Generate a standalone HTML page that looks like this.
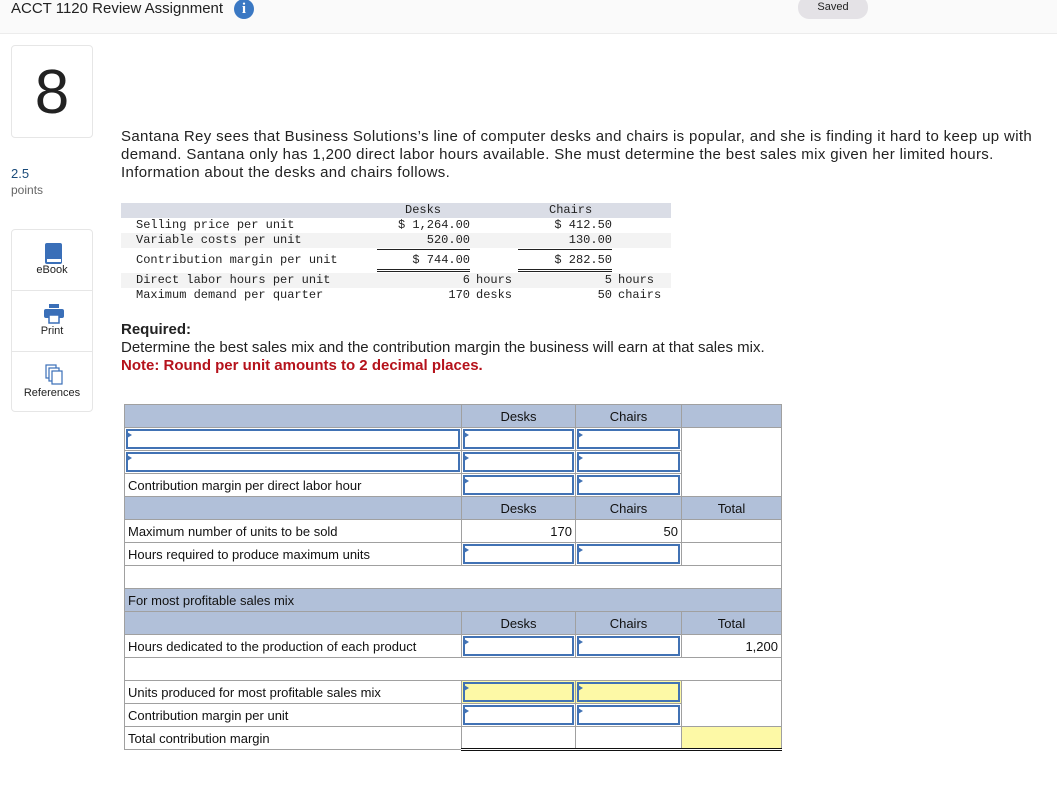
<!DOCTYPE html>
<html><head><meta charset="utf-8"><style>
*{box-sizing:border-box;margin:0;padding:0}
body{width:1057px;height:795px;background:#fff;font-family:"Liberation Sans",Arial,sans-serif;color:#222;position:relative;overflow:hidden}
.topbar{position:absolute;left:0;top:0;width:1057px;height:34px;background:#fafafa;border-bottom:1px solid #ececec}
.title{position:absolute;left:11px;top:0;font-size:15px;color:#222}
.info{position:absolute;left:234px;top:-1px;width:20px;height:20px;border-radius:50%;background:#3a78c3;color:#fff;font-weight:bold;font-family:"Liberation Serif",serif;font-size:15px;text-align:center;line-height:20px}
.saved{position:absolute;left:798px;top:-4px;width:70px;height:23px;border-radius:11px;background:#e4e2e6;font-size:11px;text-align:center;line-height:23px;color:#222}
.qnum{position:absolute;left:11px;top:45px;width:82px;height:93px;border:1px solid #e6e6e6;border-radius:4px;font-size:62px;text-align:center;line-height:93px;color:#222;font-weight:300}
.pts{position:absolute;left:11px;top:166px;font-size:13px;color:#1a4b7a}
.pts2{position:absolute;left:11px;top:183px;font-size:12px;color:#666}
.side{position:absolute;left:11px;top:229px;width:82px;height:183px;border:1px solid #e6e6e6;border-radius:4px}
.side div{height:61px;border-bottom:1px solid #e6e6e6;position:relative;font-size:11px;text-align:center}
.side div:last-child{border-bottom:none}
.side span{position:absolute;left:0;right:0;bottom:14px}
.prob{position:absolute;left:121px;top:128px;width:916px;font-size:15px;line-height:18px;color:#222;letter-spacing:0.35px}
.mono{position:absolute;font-family:"Liberation Mono",monospace;font-size:12px;color:#222;white-space:pre;line-height:15px}
.rn{text-align:right}
.tbl{position:absolute;left:124px;top:404px;border-collapse:collapse;table-layout:fixed;font-size:13px}
.tbl td{border:1px solid #a0a0a0;height:23px;padding:0 3px;position:relative;color:#111;white-space:nowrap}
.h{background:#b1c0d9;text-align:center}
.r{text-align:right}
.in::after{content:"";position:absolute;left:1px;top:1px;right:1px;bottom:1px;border:2px solid #4172b4}
.in::before{content:"";position:absolute;left:2px;top:4px;border-left:5px solid #4172b4;border-top:3px solid transparent;border-bottom:3px solid transparent;z-index:2}
.y{background:#fdf9a6}
.bb td.dbl{border-bottom:3px double #111}
</style></head><body>
<div class="topbar"></div>
<div class="title">ACCT 1120 Review Assignment</div>
<div class="info">i</div>
<div class="saved">Saved</div>
<div class="qnum">8</div>
<div class="pts">2.5</div>
<div class="pts2">points</div>
<div class="side">
<div><svg style="position:absolute;left:32px;top:12px" width="20" height="24"><rect x="1" y="1" width="17" height="21" rx="2" fill="#3a6fb8"/><rect x="3" y="17" width="14" height="3" fill="#fff"/></svg><span>eBook</span></div>
<div><svg style="position:absolute;left:31px;top:12px" width="22" height="22"><rect x="6" y="1" width="10" height="4" fill="#3a6fb8"/><rect x="1" y="6" width="20" height="9" rx="2" fill="#3a6fb8"/><rect x="6" y="12" width="10" height="8" fill="#fff" stroke="#3a6fb8" stroke-width="1.5"/></svg><span>Print</span></div>
<div><svg style="position:absolute;left:33px;top:12px" width="20" height="22"><rect x="1" y="1" width="10" height="13" fill="#fff" stroke="#3a6fb8" stroke-width="1.2"/><rect x="4" y="4" width="10" height="13" fill="#fff" stroke="#3a6fb8" stroke-width="1.2"/><rect x="7" y="7" width="10" height="13" fill="#fff" stroke="#3a6fb8" stroke-width="1.2"/></svg><span>References</span></div>
</div>
<div class="prob">Santana Rey sees that Business Solutions’s line of computer desks and chairs is popular, and she is finding it hard to keep up with demand. Santana only has 1,200 direct labor hours available. She must determine the best sales mix given her limited hours. Information about the desks and chairs follows.</div>

<div style="position:absolute;left:121px;top:203px;width:550px;height:15px;background:#dadde6"></div>
<div style="position:absolute;left:121px;top:233px;width:550px;height:15px;background:#f3f3f3"></div>
<div style="position:absolute;left:121px;top:273px;width:550px;height:15px;background:#f3f3f3"></div>
<div style="position:absolute;left:377px;top:249px;width:93px;border-top:1px solid #222"></div>
<div style="position:absolute;left:518px;top:249px;width:94px;border-top:1px solid #222"></div>
<div style="position:absolute;left:377px;top:269px;width:93px;height:3px;border-top:1px solid #222;border-bottom:1px solid #222"></div>
<div style="position:absolute;left:518px;top:269px;width:94px;height:3px;border-top:1px solid #222;border-bottom:1px solid #222"></div>

<div class="mono" style="left:136px;top:218px">Selling price per unit
Variable costs per unit</div>
<div class="mono" style="left:136px;top:253px">Contribution margin per unit</div>
<div class="mono" style="left:136px;top:273px">Direct labor hours per unit
Maximum demand per quarter</div>

<div class="mono" style="left:405px;top:203px">Desks</div>
<div class="mono" style="left:549px;top:203px">Chairs</div>
<div class="mono rn" style="left:370px;width:100px;top:218px">$ 1,264.00
520.00</div>
<div class="mono rn" style="left:370px;width:100px;top:253px">$ 744.00</div>
<div class="mono rn" style="left:512px;width:100px;top:218px">$ 412.50
130.00</div>
<div class="mono rn" style="left:512px;width:100px;top:253px">$ 282.50</div>
<div class="mono rn" style="left:420px;width:50px;top:273px">6
170</div>
<div class="mono" style="left:476px;top:273px">hours
desks</div>
<div class="mono rn" style="left:560px;width:52px;top:273px">5
50</div>
<div class="mono" style="left:618px;top:273px">hours
chairs</div>

<div style="position:absolute;left:121px;top:321px;font-size:15px;line-height:18px">
<b>Required:</b><br>Determine the best sales mix and the contribution margin the business will earn at that sales mix.<br><b style="color:#b5121b">Note: Round per unit amounts to 2 decimal places.</b></div>

<table class="tbl">
<colgroup><col style="width:337px"><col style="width:114px"><col style="width:106px"><col style="width:100px"></colgroup>
<tr><td class="h"></td><td class="h">Desks</td><td class="h">Chairs</td><td class="h"></td></tr>
<tr><td class="in"></td><td class="in"></td><td class="in"></td><td rowspan="3"></td></tr>
<tr><td class="in"></td><td class="in"></td><td class="in"></td></tr>
<tr><td>Contribution margin per direct labor hour</td><td class="in"></td><td class="in"></td></tr>
<tr><td class="h"></td><td class="h">Desks</td><td class="h">Chairs</td><td class="h">Total</td></tr>
<tr><td>Maximum number of units to be sold</td><td class="r">170</td><td class="r">50</td><td></td></tr>
<tr><td>Hours required to produce maximum units</td><td class="in"></td><td class="in"></td><td></td></tr>
<tr><td colspan="4"></td></tr>
<tr><td colspan="4" class="h" style="text-align:left">For most profitable sales mix</td></tr>
<tr><td class="h"></td><td class="h">Desks</td><td class="h">Chairs</td><td class="h">Total</td></tr>
<tr><td>Hours dedicated to the production of each product</td><td class="in"></td><td class="in"></td><td class="r">1,200</td></tr>
<tr><td colspan="4"></td></tr>
<tr><td>Units produced for most profitable sales mix</td><td class="in y"></td><td class="in y"></td><td rowspan="2"></td></tr>
<tr><td>Contribution margin per unit</td><td class="in"></td><td class="in"></td></tr>
<tr class="bb"><td>Total contribution margin</td><td class="dbl"></td><td class="dbl"></td><td class="dbl y"></td></tr>
</table>
</body></html>
